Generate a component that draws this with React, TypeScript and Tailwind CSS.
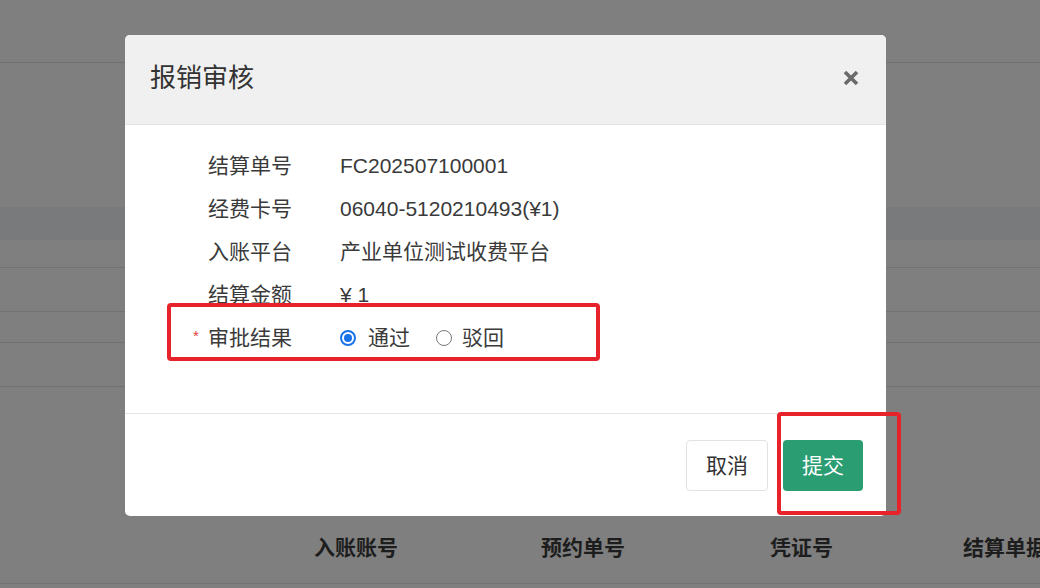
import React from "react";

const FONT = { fontFamily: '"Liberation Sans", "Noto Sans CJK SC", sans-serif' };

interface Field {
  label: string;
  value: string;
}

const fields: Field[] = [
  { label: "结算单号", value: "FC202507100001" },
  { label: "经费卡号", value: "06040-5120210493(¥1)" },
  { label: "入账平台", value: "产业单位测试收费平台" },
  { label: "结算金额", value: "¥ 1" },
];

const Row: React.FC<{ label: React.ReactNode; children: React.ReactNode }> = ({
  label,
  children,
}) => (
  <div className="flex h-[43px] items-center">
    <div className="w-[167px] text-right relative">{label}</div>
    <div className="ml-[48px] flex items-center">{children}</div>
  </div>
);

export default function App() {
  return (
    <div
      className="relative w-[1040px] h-[588px] overflow-hidden bg-[#7f7f7f] text-[21px] leading-none"
      style={FONT}
    >
      {/* page underneath the overlay */}
      <div className="flex flex-col">
        <div className="h-[62px]" />
        <div className="h-px bg-[#727272]" />
        <div className="h-[144px]" />
        <div className="h-[33px] bg-[#787a7c]" />
        <div className="h-[27px]" />
        <div className="h-px bg-[#727272]" />
        <div className="h-[43px]" />
        <div className="h-px bg-[#727272]" />
        <div className="h-[30px]" />
        <div className="h-px bg-[#727272]" />
        <div className="h-[43px]" />
        <div className="h-px bg-[#727272]" />
        <div className="h-[196px] flex items-end pb-[25px] pl-[314px] font-bold text-[#1d1d1d] whitespace-nowrap">
          <div className="w-[227px] shrink-0">入账账号</div>
          <div className="w-[229px] shrink-0">预约单号</div>
          <div className="w-[193px] shrink-0">凭证号</div>
          <div className="shrink-0">结算单据</div>
        </div>
        <div className="h-px bg-[#727272]" />
      </div>

      {/* modal */}
      <div className="absolute left-[125px] top-[35px] w-[761px] h-[481px] bg-white rounded-[5px] flex flex-col overflow-hidden">
        <div className="h-[90px] bg-[#f0f0f0] border-b border-[#e4e4e4] flex items-center justify-between pl-[25px] pr-[27px] pb-[3px]">
          <div className="text-[26px] text-[#333]">报销审核</div>
          <svg width="16" height="16" viewBox="0 0 16 16">
            <path d="M2 2 L14 14 M14 2 L2 14" stroke="#6b6b6b" strokeWidth="3.6" />
          </svg>
        </div>

        <div className="flex-1 pt-[19px] text-[#3a3a3a]">
          {fields.map((f) => (
            <Row key={f.label} label={f.label}>
              {f.value}
            </Row>
          ))}
          <Row
            label={
              <>
                <span className="absolute left-[68px] top-[1px] text-[15px] text-[#e0403a]">*</span>
                审批结果
              </>
            }
          >
            <span className="w-[16px] h-[16px] rounded-full border-2 border-[#1a73e8] flex items-center justify-center">
              <span className="w-[8px] h-[8px] rounded-full bg-[#1a73e8]" />
            </span>
            <span className="ml-[12px]">通过</span>
            <span className="ml-[26px] w-[16px] h-[16px] rounded-full border-[1.5px] border-[#7a7a7a]" />
            <span className="ml-[10px]">驳回</span>
          </Row>
        </div>

        <div className="h-[103px] border-t border-[#e4e4e4] flex items-center justify-end gap-[15px] pr-[23px]">
          <button className="w-[82px] h-[51px] rounded-[4px] border border-[#e2e2e2] bg-white text-[#333]">
            取消
          </button>
          <button className="w-[80px] h-[51px] rounded-[4px] bg-[#2b9d73] text-white">
            提交
          </button>
        </div>
      </div>

      {/* red annotation boxes */}
      <div className="absolute left-[167px] top-[303px] w-[433px] h-[58px] border-4 border-[#e8222a] rounded-[4px]" />
      <div className="absolute left-[777px] top-[412px] w-[124px] h-[103px] border-4 border-[#e8222a] rounded-[4px]" />
    </div>
  );
}
